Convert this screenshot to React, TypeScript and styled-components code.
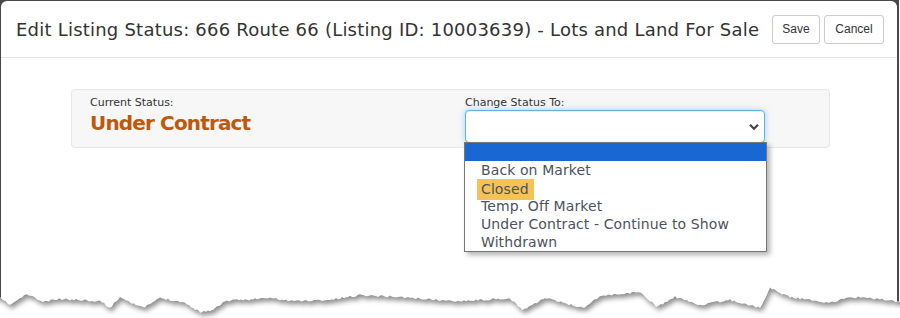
import React from "react";
import styled, { createGlobalStyle } from "styled-components";

const GlobalStyle = createGlobalStyle`
  html, body { margin: 0; padding: 0; background: #fff; }
  #root { width: 900px; height: 318px; }
`;

const Stage = styled.div`
  position: relative;
  width: 900px;
  height: 318px;
  overflow: hidden;
  font-family: "DejaVu Sans", Verdana, sans-serif;
  background: #fff;
`;

const Backdrop = styled.div`
  width: 899px;
  height: 312px;
  box-sizing: border-box;
  padding: 1px 2px 0 1px;
  background: #484848;
`;

const Modal = styled.div`
  height: 100%;
  background: #fff;
  border-radius: 6px 6px 0 0;
`;

const Header = styled.div`
  display: flex;
  align-items: center;
  height: 56px;
  padding: 0 13px 0 15px;
  border-bottom: 1px solid #e5e5e5;
`;

const Title = styled.h4`
  flex: 1;
  margin: 0;
  font-size: 18px;
  font-weight: normal;
  color: #333;
  white-space: nowrap;
  letter-spacing: 0.22px;
`;

const Actions = styled.div`
  display: flex;
  gap: 4px;
`;

const Button = styled.button<{ $w: number }>`
  width: ${(p) => p.$w}px;
  height: 29px;
  padding: 0;
  font-family: "Liberation Sans", Arial, sans-serif;
  font-size: 12px;
  color: #333;
  background: #fff;
  border: 1px solid #ccc;
  border-radius: 3px;
`;

const Body = styled.div`
  padding: 31px 67px 0 70px;
`;

const Panel = styled.div`
  display: grid;
  grid-template-columns: 375px 300px;
  height: 59px;
  box-sizing: border-box;
  padding: 6px 18px 0;
  background: #f7f7f7;
  border: 1px solid #e6e6e6;
  border-radius: 4px;
`;

const Field = styled.div`
  display: flex;
  flex-direction: column;
`;

const Label = styled.div`
  font-size: 11px;
  line-height: 13px;
  color: #333;
`;

const StatusValue = styled.div`
  margin-top: 2px;
  font-size: 20px;
  line-height: 24px;
  font-weight: bold;
  color: #c0580b;
  letter-spacing: -0.85px;
`;

const SelectWrap = styled.div`
  position: relative;
  margin-top: 1px;
  width: 300px;
`;

const SelectBox = styled.div`
  height: 33px;
  box-sizing: border-box;
  border: 1px solid #66afe9;
  border-radius: 4px;
  background: #fff;
  box-shadow: inset 0 1px 1px rgba(0, 0, 0, 0.075), 0 0 6px rgba(102, 175, 233, 0.55);
  display: flex;
  align-items: center;
  justify-content: flex-end;
  padding-right: 4px;
`;

const List = styled.ul`
  position: absolute;
  top: 32px;
  left: -1px;
  width: 301px;
  margin: 0;
  padding: 0;
  list-style: none;
  background: #fff;
  border: 1px solid #767676;
  box-shadow: 3px 3px 5px rgba(0, 0, 0, 0.3);
  z-index: 2;
`;

const Option = styled.li<{ $selected?: boolean }>`
  height: 18px;
  line-height: 18px;
  padding-left: 16px;
  font-size: 14px;
  letter-spacing: 0.1px;
  color: #4c525e;
  white-space: nowrap;
  background: ${(p) => (p.$selected ? "#1967d2" : "transparent")};
`;

const Mark = styled.span`
  display: inline-block;
  line-height: 21px;
  margin-left: -4px;
  padding: 0 5px 0 4px;
  background: #f6c257;
`;

const TornEdge = styled.svg`
  position: absolute;
  left: 0;
  top: 278px;
  display: block;
`;

const KEY: [number, number][] = [
  [0, 298], [10, 305], [27, 294], [43, 302], [60, 299], [100, 301], [110, 308],
  [120, 297], [143, 308], [160, 298], [183, 302], [200, 312], [213, 310], [225, 301],
  [270, 298], [290, 301], [330, 300], [360, 295], [400, 297], [450, 301], [480, 300],
  [510, 299], [523, 310], [545, 298], [583, 308], [600, 296], [640, 292], [657, 307],
  [675, 297], [700, 305], [730, 300], [760, 308], [770, 288], [790, 297], [830, 303],
  [850, 297], [880, 299], [900, 302],
];

const TOP = 278;
const H = 40;

function buildEdge(): string {
  let seed = 11;
  const rnd = () => {
    seed = (seed * 16807) % 2147483647;
    return (seed - 1) / 2147483646;
  };
  const pts: string[] = [];
  for (let i = 0; i < KEY.length - 1; i++) {
    const [x0, y0] = KEY[i];
    const [x1, y1] = KEY[i + 1];
    for (let x = x0; x < x1; x += 2) {
      const t = (x - x0) / (x1 - x0);
      const y = y0 + (y1 - y0) * t + (rnd() - 0.5) * 2;
      pts.push(`${x},${(y - TOP).toFixed(1)}`);
    }
  }
  pts.push(`900,${302 - TOP}`);
  return pts.join(" L");
}

const EDGE = buildEdge();
const ABOVE = `M-10,-10 L-10,${298 - TOP} L${EDGE} L910,${302 - TOP} L910,-10 Z`;
const BELOW = `M0,${H} L${EDGE} L900,${H} Z`;

function Torn() {
  return (
    <TornEdge width={900} height={H} viewBox={`0 0 900 ${H}`}>
      <defs>
        <clipPath id="below">
          <path d={BELOW} />
        </clipPath>
        <filter id="soft" x="-5%" y="-50%" width="110%" height="200%">
          <feGaussianBlur stdDeviation="2.4" />
        </filter>
      </defs>
      <path d={BELOW} fill="#fff" />
      <g clipPath="url(#below)">
        <path d={ABOVE} fill="#8e8e8e" transform="translate(2,3.5)" filter="url(#soft)" />
      </g>
    </TornEdge>
  );
}

function Chevron() {
  return (
    <svg width="12" height="8" viewBox="0 0 12 8">
      <path d="M2 1.8 L6 5.8 L10 1.8" fill="none" stroke="#444" strokeWidth="2.2" />
    </svg>
  );
}

const OPTIONS = ["Back on Market", "Closed", "Temp. Off Market", "Under Contract - Continue to Show", "Withdrawn"];

export default function App() {
  return (
    <>
      <GlobalStyle />
      <Stage>
        <Backdrop>
          <Modal>
            <Header>
              <Title>Edit Listing Status: 666 Route 66 (Listing ID: 10003639) - Lots and Land For Sale</Title>
              <Actions>
                <Button $w={48}>Save</Button>
                <Button $w={60}>Cancel</Button>
              </Actions>
            </Header>
            <Body>
              <Panel>
                <Field>
                  <Label>Current Status:</Label>
                  <StatusValue>Under Contract</StatusValue>
                </Field>
                <Field>
                  <Label>Change Status To:</Label>
                  <SelectWrap>
                    <SelectBox>
                      <Chevron />
                    </SelectBox>
                    <List>
                      <Option $selected>&nbsp;</Option>
                      {OPTIONS.map((o) => (
                        <Option key={o}>{o === "Closed" ? <Mark>{o}</Mark> : o}</Option>
                      ))}
                    </List>
                  </SelectWrap>
                </Field>
              </Panel>
            </Body>
          </Modal>
        </Backdrop>
        <Torn />
      </Stage>
    </>
  );
}
